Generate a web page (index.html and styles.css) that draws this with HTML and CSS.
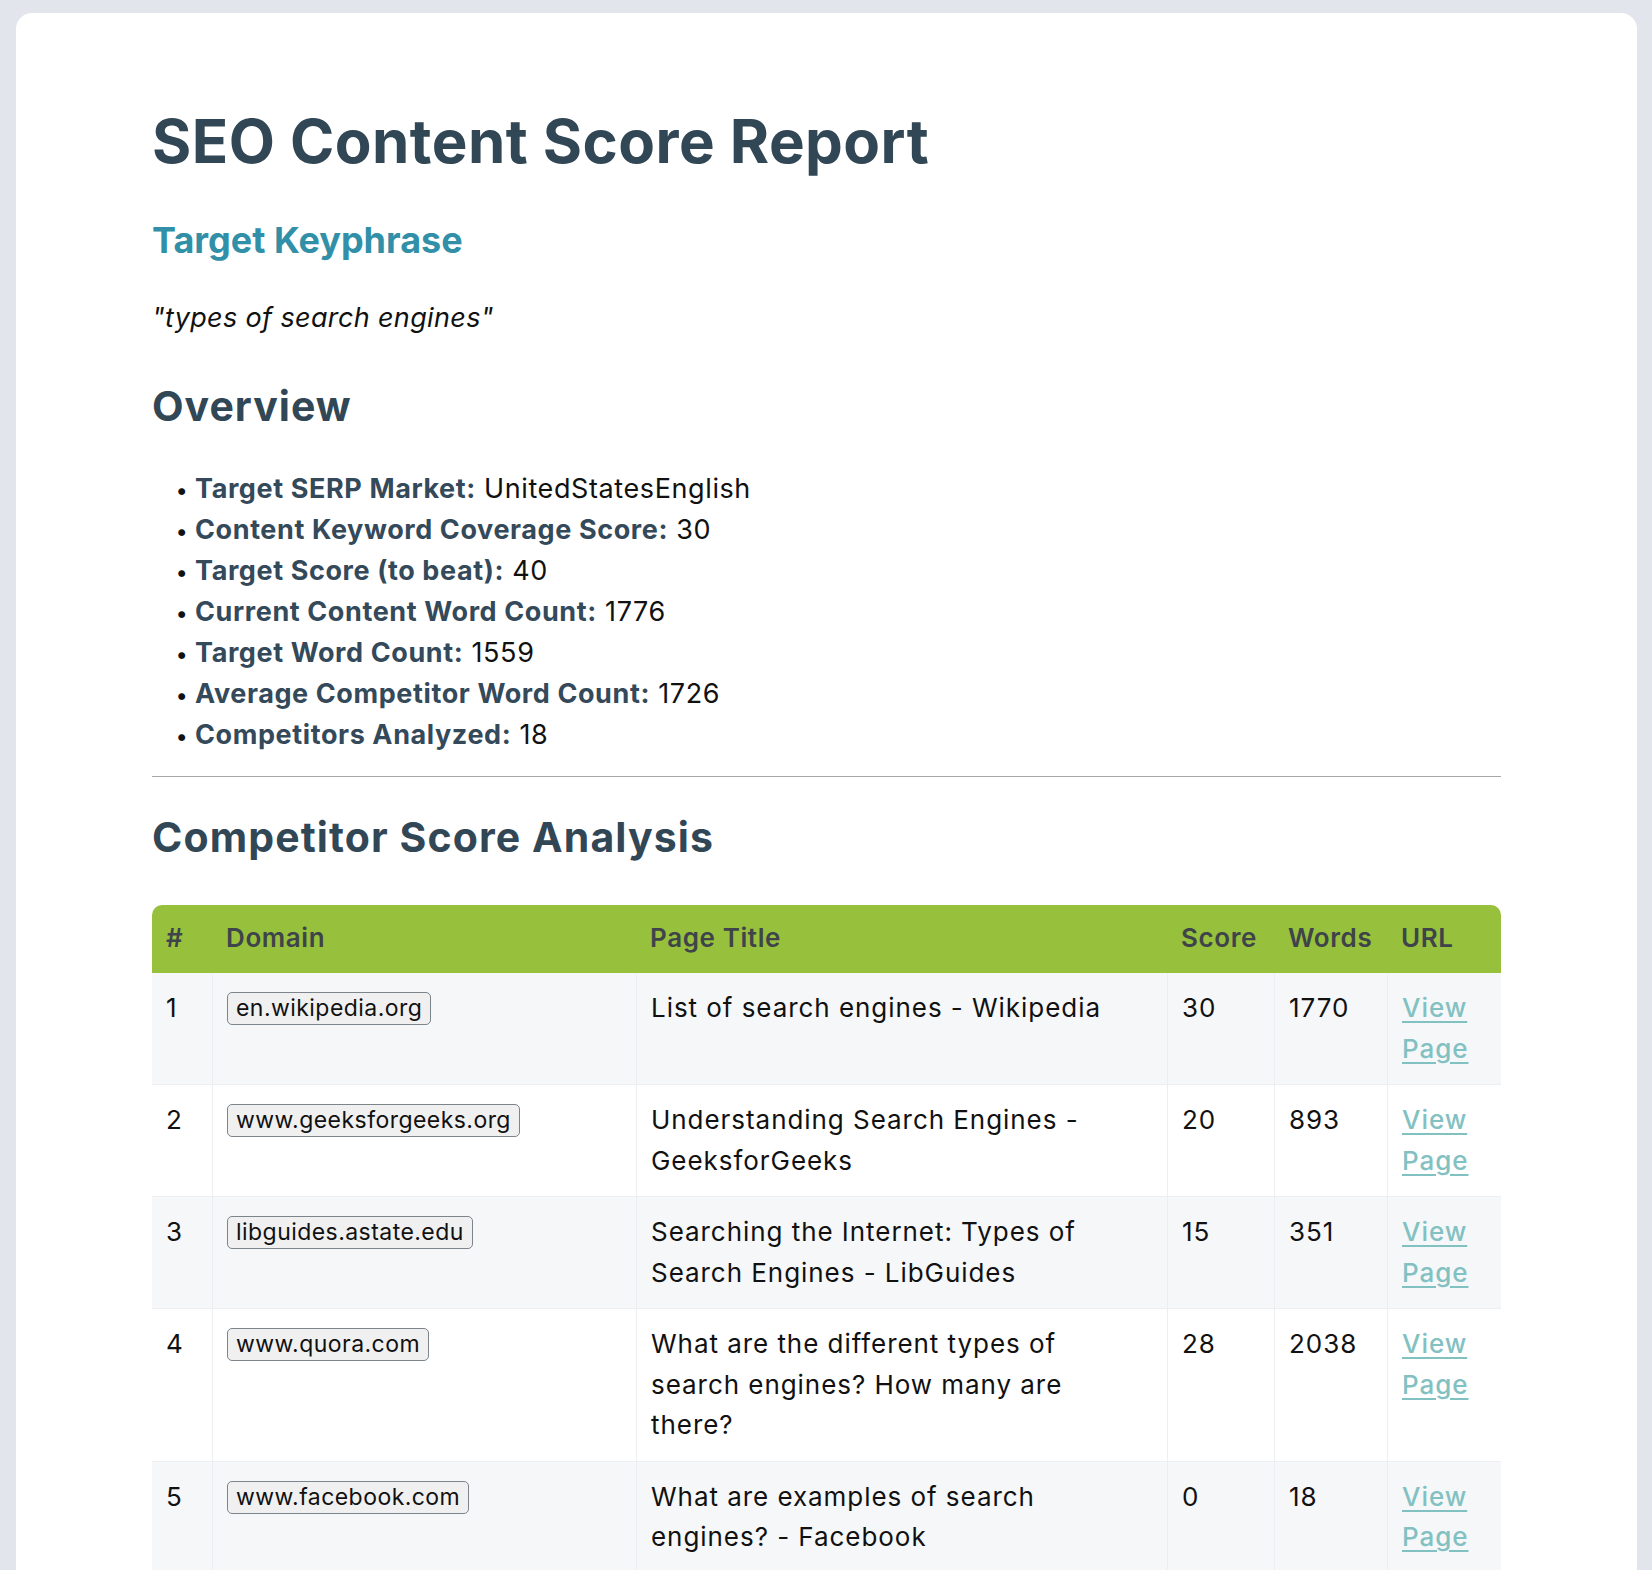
FILE: index.html
```html
<!DOCTYPE html>
<html lang="en">
<head>
<meta charset="utf-8">
<title>SEO Content Score Report</title>
<link rel="stylesheet" href="styles.css">
</head>
<body>
<main class="card">
  <h1 class="title">SEO Content Score Report</h1>
  <h3 class="subhead">Target Keyphrase</h3>
  <p class="keyphrase">"types of search engines"</p>
  <h2 class="section overview">Overview</h2>
  <ul class="stats">
    <li><strong>Target SERP Market:</strong> UnitedStatesEnglish</li>
    <li><strong>Content Keyword Coverage Score:</strong> 30</li>
    <li><strong>Target Score (to beat):</strong> 40</li>
    <li><strong>Current Content Word Count:</strong> 1776</li>
    <li><strong>Target Word Count:</strong> 1559</li>
    <li><strong>Average Competitor Word Count:</strong> 1726</li>
    <li><strong>Competitors Analyzed:</strong> 18</li>
  </ul>
  <hr class="divider">
  <h2 class="section analysis">Competitor Score Analysis</h2>
  <table class="scores">
    <colgroup>
      <col class="c-num"><col class="c-domain"><col class="c-title"><col class="c-score"><col class="c-words"><col class="c-url">
    </colgroup>
    <thead>
      <tr><th>#</th><th>Domain</th><th>Page Title</th><th>Score</th><th>Words</th><th>URL</th></tr>
    </thead>
    <tbody>
      <tr><td>1</td><td><span class="badge">en.wikipedia.org</span></td><td>List of search engines - Wikipedia</td><td>30</td><td>1770</td><td><a href="#">View Page</a></td></tr>
      <tr><td>2</td><td><span class="badge">www.geeksforgeeks.org</span></td><td>Understanding Search Engines - GeeksforGeeks</td><td>20</td><td>893</td><td><a href="#">View Page</a></td></tr>
      <tr><td>3</td><td><span class="badge">libguides.astate.edu</span></td><td>Searching the Internet: Types of Search Engines - LibGuides</td><td>15</td><td>351</td><td><a href="#">View Page</a></td></tr>
      <tr><td>4</td><td><span class="badge">www.quora.com</span></td><td>What are the different types of search engines? How many are there?</td><td>28</td><td>2038</td><td><a href="#">View Page</a></td></tr>
      <tr><td>5</td><td><span class="badge">www.facebook.com</span></td><td>What are examples of search engines? - Facebook</td><td>0</td><td>18</td><td><a href="#">View Page</a></td></tr>
    </tbody>
  </table>
</main>
</body>
</html>
```

FILE: styles.css
```css
* { box-sizing: border-box; }

html, body {
  margin: 0;
  padding: 0;
  background: #e2e5ec;
}

body {
  font-family: Inter, Lato, "Open Sans", sans-serif;
  color: #111;
  padding: 13px 15px 0 16px;
}

.card {
  background: #fff;
  border-radius: 16px;
  padding: 92px 136px 80px 136px;
}

.title {
  margin: 0;
  font-size: 60px;
  line-height: 73px;
  font-weight: 700;
  letter-spacing: 0.45px;
  color: #324756;
}

.subhead {
  margin: 40px 0 0;
  font-size: 36px;
  line-height: 44px;
  font-weight: 700;
  color: #3190a8;
}

.keyphrase {
  margin: 36px 0 0;
  font-size: 27px;
  line-height: 40px;
  font-style: italic;
  letter-spacing: 0.35px;
  color: #111;
}

.section {
  margin: 0;
  font-weight: 700;
  color: #324756;
}

.overview {
  margin-top: 43px;
  font-size: 41px;
  line-height: 50px;
  letter-spacing: 1px;
}

.stats {
  margin: 37px 0 0;
  padding-left: 43px;
  font-size: 27px;
  line-height: 41px;
  letter-spacing: 0.6px;
}

.stats li::marker {
  content: "• ";
  font-size: 22px;
}

.stats strong {
  color: #34495a;
  font-weight: 700;
}

.divider {
  margin: 21px 0 0;
  border: 0;
  border-top: 1px solid #a8a8a8;
  height: 0;
}

.analysis {
  margin-top: 37px;
  font-size: 41px;
  line-height: 47px;
  letter-spacing: 1.1px;
}

.scores {
  margin-top: 44px;
  width: 100%;
  table-layout: fixed;
  border-collapse: separate;
  border-spacing: 0;
  font-size: 26px;
  line-height: 40.5px;
  letter-spacing: 0.95px;
}

.c-num { width: 60px; }
.c-domain { width: 424px; }
.c-title { width: 531px; }
.c-score { width: 107px; }
.c-words { width: 113px; }
.c-url { width: 114px; }

.scores th {
  background: #97c13d;
  color: #3e4449;
  font-weight: 600;
  font-size: 26px;
  line-height: 42px;
  letter-spacing: 0.6px;
  text-align: left;
  padding: 12px 14px 14px;
}

.scores th:first-child { border-top-left-radius: 10px; }
.scores th:last-child { border-top-right-radius: 10px; }

.scores td {
  vertical-align: top;
  padding: 15px 14px 15px 14px;
  border-left: 1px solid #eceef1;
  border-bottom: 1px solid #eceef1;
}

.scores td:first-child { border-left: 0; }

.scores tbody tr:nth-child(odd) td { background: #f6f7f9; }
.scores tbody tr:nth-child(even) td { background: #fff; }

.badge {
  display: inline-block;
  font-size: 23px;
  line-height: 27px;
  letter-spacing: 0.45px;
  padding: 2px 8px;
  border: 1px solid #7c848c;
  border-radius: 5px;
  background: #f0f0f1;
  color: #111;
  vertical-align: 1px;
}

.scores a {
  color: #82c1c2;
  text-decoration: underline;
  text-decoration-thickness: 2px;
  text-underline-offset: 4px;
  font-weight: 500;
}
```
